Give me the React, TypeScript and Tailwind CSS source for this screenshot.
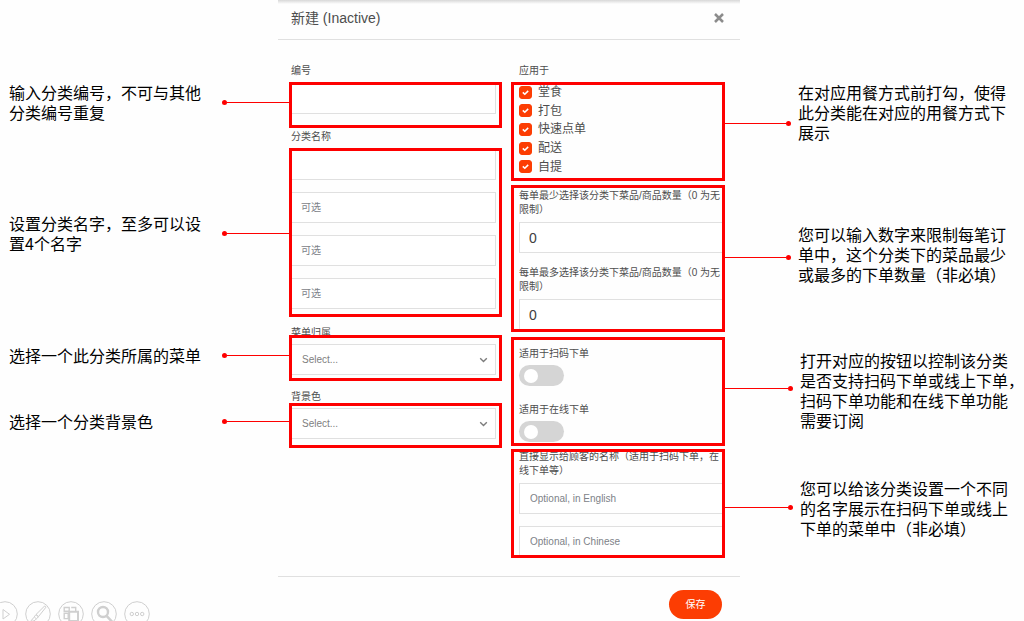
import React, { useState } from 'react';
import clsx from 'clsx';

const inputClass =
  'block h-[31px] w-full border border-[#e0e0e0] bg-white text-[#404040] outline-none placeholder:text-[#7d8288] placeholder:opacity-100';

const DINING_TYPES = ['堂食', '打包', '快速点单', '配送', '自提'];

const LEFT_NOTES = [
  { text: '输入分类编号，不可与其他\n分类编号重复', row: 'mt-[82px]' },
  { text: '设置分类名字，至多可以设\n置4个名字', row: 'mt-[91px]' },
  { text: '选择一个此分类所属的菜单', row: 'mt-[92px]' },
  { text: '选择一个分类背景色', row: 'mt-[46px]' },
];

const RIGHT_NOTES = [
  { text: '在对应用餐方式前打勾，使得\n此分类能在对应的用餐方式下\n展示', row: 'mt-[82px]', line: 'mt-[39px]', width: 'w-[66px]' },
  { text: '您可以输入数字来限制每笔订\n单中，这个分类下的菜品最少\n或最多的下单数量（非必填）', row: 'mt-[82px]', line: 'mt-[31px]', width: 'w-[66px]' },
  { text: '打开对应的按钮以控制该分类\n是否支持扫码下单或线上下单，\n扫码下单功能和在线下单功能\n需要订阅', row: 'mt-[66px]', line: 'mt-[36px]', width: 'w-[68px]' },
  { text: '您可以给该分类设置一个不同\n的名字展示在扫码下单或线上\n下单的菜单中（非必填）', row: 'mt-[48px]', line: 'mt-[27px]', width: 'w-[68px]' },
];

const Frame: React.FC<{ className?: string; children: React.ReactNode }> = ({ className, children }) => (
  <div className={clsx('relative overflow-hidden border-[3px] border-[#fe0000]', className)}>{children}</div>
);

const SelectField: React.FC<{ id: string }> = ({ id }) => (
  <div className="relative mr-[3px]">
    <select
      id={id}
      className="block h-[31px] w-full appearance-none border border-l-0 border-[#e0e0e0] bg-white pl-[10px] text-[10px] text-[#808080] outline-none"
    >
      <option>Select...</option>
    </select>
    <svg className="pointer-events-none absolute top-[12px] right-[8px]" width="9" height="8" viewBox="0 0 9 8" fill="none">
      <path d="M1.2 2.2 4.5 5.4 7.8 2.2" stroke="#7c7c7c" strokeWidth="1.4" />
    </svg>
  </div>
);

const Toggle: React.FC<{ id: string; label: string }> = ({ id, label }) => {
  const [on, setOn] = useState(false);
  return (
    <div>
      <label htmlFor={id} className="block leading-4">{label}</label>
      <button
        id={id}
        type="button"
        role="switch"
        aria-checked={on}
        onClick={() => setOn(!on)}
        className={clsx('mt-[3px] flex h-[21px] w-[45px] items-center rounded-full px-[5px]', on ? 'justify-end bg-[#fc3d03]' : 'bg-[#d5d5d5]')}
      >
        <span className="size-[14px] rounded-full bg-white" />
      </button>
    </div>
  );
};

const SlideShowBar = () => (
  <div className="mt-auto -ml-2 flex h-5 gap-[7px] overflow-hidden">
    {['next', 'pen', 'slides', 'zoom', 'more'].map(name => (
      <button key={name} type="button" aria-label={name} className="size-[26px] shrink-0">
        <svg width="26" height="26" viewBox="0 0 26 26" fill="none" stroke="#cfcfcf" strokeWidth="1">
          <circle cx="13" cy="13" r="12.3" />
          {name === 'next' && <path d="M11 8.5v9.5l6.5-4.7z" />}
          {name === 'pen' && (
            <g>
              <path d="M19.2 5.4c1-.8 2.2.2 1.4 1.3l-7.2 9-2.4-2.2z" />
              <path d="M11 13.5l2.4 2.2-2 2.2-2.2-2z" />
              <path d="M9.2 16.1c-1.4.8-1.6 2.6-3.6 4.1 2.2.2 4.6-.4 5.6-2.2" />
            </g>
          )}
          {name === 'slides' && (
            <g>
              <path d="M6.2 6.5h5v3.8h-5zM13.2 6.5h4.5v3.8M6.2 12.2h4v5.4h-4z" strokeWidth="1.4" />
              <path d="M11.2 10.7h8.8v9.3h-8.8z" strokeWidth="2" />
            </g>
          )}
          {name === 'zoom' && (
            <g>
              <circle cx="12" cy="11" r="5" strokeWidth="2.4" />
              <path d="M15.8 15.2l5.4 5.6" strokeWidth="2.6" />
            </g>
          )}
          {name === 'more' && (
            <g>
              <circle cx="7.8" cy="13" r="1.7" />
              <circle cx="13" cy="13" r="1.7" />
              <circle cx="18.2" cy="13" r="1.7" />
            </g>
          )}
        </svg>
      </button>
    ))}
  </div>
);

const CategoryDialog = () => (
  <form className="flex min-w-0 flex-col bg-[#fefefe] text-[10px] text-[#4d4d4d]" onSubmit={e => e.preventDefault()}>
    <header className="border-b border-[#e0e0e0]">
      <div className="h-1 bg-linear-to-b from-[#d8d8d8] to-[#fefefe]" />
      <div className="flex h-[35px] items-center justify-between pr-4 pb-2 pl-[13px]">
        <h1 className="text-[14px] leading-5">新建 (Inactive)</h1>
        <button type="button" aria-label="关闭" className="mt-px">
          <svg width="10" height="10" viewBox="0 0 10 10" stroke="#8c8c8c" strokeWidth="2.5">
            <path d="M1 1l8 8M9 1L1 9" />
          </svg>
        </button>
      </div>
    </header>

    <div className="grid grid-cols-[213fr_214fr] gap-[9px] pt-[22px] pr-[15px] pb-[18px] pl-[11px]">
      <div>
        <label htmlFor="code" className="block pt-px pb-[3px] pl-[2px] leading-4">编号</label>
        <Frame className="h-[46px]">
          <div className="-mt-[2px] mr-[3px]">
            <input id="code" className={clsx(inputClass, 'border-l-0 pl-[9px]')} />
          </div>
        </Frame>

        <label htmlFor="name-0" className="block pt-px pb-[3px] pl-[2px] leading-4">分类名称</label>
        <Frame className="h-[169px]">
          <div className="-mt-[2px] mr-[3px] space-y-3">
            {[0, 1, 2, 3].map(i => (
              <input
                key={i}
                id={`name-${i}`}
                aria-label={`分类名称 ${i + 1}`}
                placeholder={i > 0 ? '可选' : undefined}
                className={clsx(inputClass, 'border-l-0 pl-[9px]')}
              />
            ))}
          </div>
        </Frame>

        <label htmlFor="menu" className="-mb-[6px] block pt-2 pl-[2px] leading-4">菜单归属</label>
        <Frame className="h-[46px] pt-[6px]">
          <SelectField id="menu" />
        </Frame>

        <label htmlFor="color" className="-mb-[2px] block pt-2 pl-[2px] leading-4">背景色</label>
        <Frame className="h-[45px] pt-[2px]">
          <SelectField id="color" />
        </Frame>
      </div>

      <div>
        <p className="pt-px pb-[3px] pl-2 leading-4">应用于</p>
        <Frame className="h-[99px] pl-[5px]">
          <div className="-mt-[2px] grid h-[93px] auto-rows-fr">
            {DINING_TYPES.map(type => (
              <label key={type} className="flex items-center gap-[6px] text-[12px] leading-4">
                <span className="relative size-[13px]">
                  <input type="checkbox" defaultChecked className="peer block size-[13px] appearance-none rounded-[3px] border border-[#fc3d03] checked:bg-[#fc3d03]" />
                  <svg className="pointer-events-none absolute inset-0 hidden peer-checked:block" width="13" height="13" viewBox="0 0 13 13" fill="none">
                    <path d="M3.8 6.4 5.8 8.3 9.2 4.9" stroke="#fff" strokeWidth="1.5" />
                  </svg>
                </span>
                {type}
              </label>
            ))}
          </div>
        </Frame>

        <Frame className="mt-1 h-[147px] pt-px pl-[5px]">
          <label htmlFor="min" className="block leading-[14px]">每单最少选择该分类下菜品/商品数量（0 为无限制）</label>
          <input id="min" defaultValue="0" className={clsx(inputClass, 'mt-[5px] border-r-0 pl-[9px] text-[14px]')} />
          <label htmlFor="max" className="mt-[13px] block leading-[14px]">每单最多选择该分类下菜品/商品数量（0 为无限制）</label>
          <input id="max" defaultValue="0" className={clsx(inputClass, 'mt-[5px] border-r-0 pl-[9px] text-[14px]')} />
        </Frame>

        <Frame className="mt-[5px] h-[109px] space-y-4 pt-[6px] pl-[5px]">
          <Toggle id="scan" label="适用于扫码下单" />
          <Toggle id="online" label="适用于在线下单" />
        </Frame>

        <Frame className="mt-[3px] h-[109px] pl-[5px]">
          <div className="-mt-[2px]">
            <label htmlFor="name-en" className="block leading-[14px]">直接显示给顾客的名称（适用于扫码下单，在线下单等）</label>
            <input id="name-en" placeholder="Optional, in English" className={clsx(inputClass, 'mt-[5px] border-r-0 pl-[10px]')} />
            <input aria-label="Chinese" placeholder="Optional, in Chinese" className={clsx(inputClass, 'mt-3 border-r-0 pl-[10px]')} />
          </div>
        </Frame>
      </div>
    </div>

    <footer className="flex justify-end border-t border-[#e0e0e0] pt-[13px] pr-[18px]">
      <button type="submit" className="h-[29px] w-[53px] rounded-full bg-[#fc3d03] text-white">保存</button>
    </footer>
  </form>
);

export default function App() {
  return (
    <main className="grid min-h-screen grid-cols-[278fr_462fr_284fr] overflow-hidden bg-[#fefefe] font-['Liberation_Sans','Noto_Sans_CJK_SC',sans-serif]">
      <aside className="relative z-10 -mr-[11px] flex flex-col font-['Noto_Sans_CJK_SC',sans-serif] text-[16px] leading-5 text-black">
        {LEFT_NOTES.map(note => (
          <div key={note.text} className={clsx('flex items-center justify-between pl-[9px]', note.row)}>
            <p className="whitespace-pre">{note.text}</p>
            <span className="flex w-[67px] items-center">
              <i className="size-[5px] rounded-full bg-[#fe0000]" />
              <i className="h-px flex-1 bg-[#fe0000]" />
            </span>
          </div>
        ))}
        <SlideShowBar />
      </aside>

      <CategoryDialog />

      <aside className="relative z-10 -ml-[15px] font-['Noto_Sans_CJK_SC',sans-serif] text-[16px] leading-5 text-black">
        {RIGHT_NOTES.map(note => (
          <div key={note.row} className={clsx('flex items-start gap-[7px]', note.row)}>
            <span className={clsx('flex shrink-0 items-center', note.line, note.width)}>
              <i className="h-px flex-1 bg-[#fe0000]" />
              <i className="size-[5px] rounded-full bg-[#fe0000]" />
            </span>
            <p className="whitespace-pre">{note.text}</p>
          </div>
        ))}
      </aside>
    </main>
  );
}
